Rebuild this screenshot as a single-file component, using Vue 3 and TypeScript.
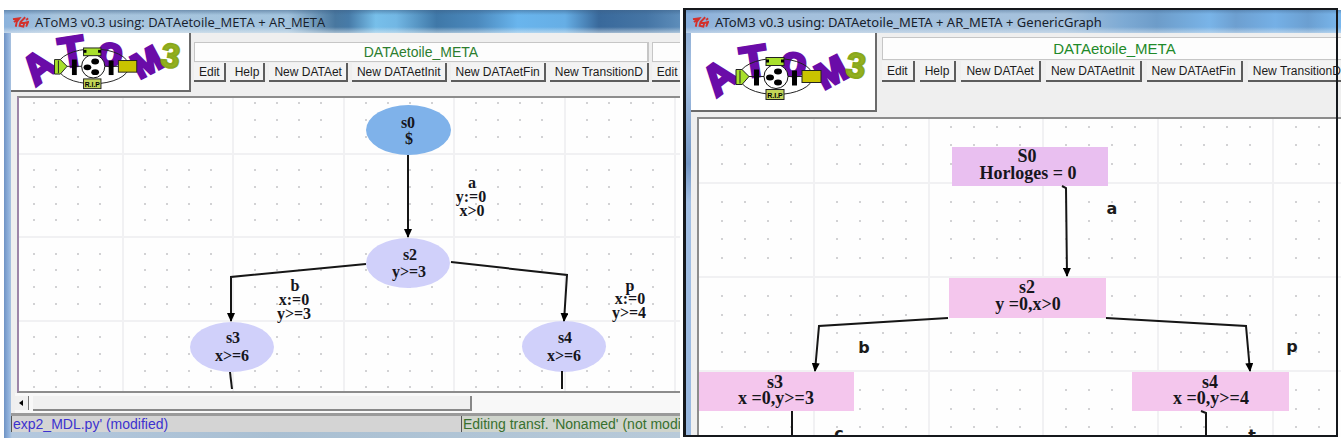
<script setup lang="ts">
interface Label { x: number; y: number; text: string; kind?: string }
interface Shape { x: number; y: number; w: number; h: number; tone: string }
interface Diagram {
  id: string
  title: string
  logoBox: string
  menus: { name: string; buttons: string[] }[]
  label: string
  height: number
  round: boolean
  shapes: Shape[]
  labels: Label[]
  edges: string[]
  tails: string[]
  grid: { dots: string; lines: string }
}

function makeGrid(x0: number, y0: number, stepX: number, stepY: number) {
  let dots = ''
  let lines = ''
  for (let i = 1; i < 90; i++) {
    const x = Math.round(x0 + i * stepX)
    if (i % 5 === 0) {
      lines += `M${x} 0V400`
      continue
    }
    for (let j = 1; j < 24; j++) {
      if (j % 5 === 0) continue
      dots += `M${x - 1} ${Math.round(y0 + j * stepY)}h2`
    }
  }
  for (let j = 5; j < 24; j += 5) lines += `M0 ${Math.round(y0 + j * stepY)}H2000`
  return { dots, lines }
}

const baseButtons = ['Edit', 'Help', 'New DATAet', 'New DATAetInit', 'New DATAetFin', 'New TransitionD']

const windows: Diagram[] = [
  {
    id: 'source',
    title: 'AToM3 v0.3 using: DATAetoile_META + AR_META',
    logoBox: '0 9 184 58',
    menus: [
      { name: 'DATAetoile_META', buttons: baseButtons },
      { name: '', buttons: ['Edit'] },
    ],
    label: 'Timed automaton',
    height: 293,
    round: true,
    shapes: [
      { x: 347, y: 7, w: 85, h: 50, tone: 'initial' },
      { x: 347, y: 140, w: 84, h: 50, tone: 'state' },
      { x: 171, y: 224, w: 84, h: 50, tone: 'state' },
      { x: 503, y: 223, w: 84, h: 51, tone: 'state' },
    ],
    labels: [
      { x: 389, y: 30, text: 's0' }, { x: 390, y: 46, text: '$' },
      { x: 391, y: 162, text: 's2' }, { x: 390, y: 179, text: 'y>=3' },
      { x: 214, y: 245, text: 's3' }, { x: 213, y: 263, text: 'x>=6' },
      { x: 546, y: 245, text: 's4' }, { x: 545, y: 263, text: 'x>=6' },
      { x: 453, y: 90, text: 'a' }, { x: 452, y: 104, text: 'y:=0' }, { x: 453, y: 118, text: 'x>0' },
      { x: 276, y: 193, text: 'b' }, { x: 275, y: 207, text: 'x:=0' }, { x: 275, y: 221, text: 'y>=3' },
      { x: 611, y: 193, text: 'p' }, { x: 611, y: 206, text: 'x:=0' }, { x: 610, y: 220, text: 'y>=4' },
    ],
    edges: ['M389 57V139', 'M347 166L212 179V223', 'M432 164L548 177L545 223'],
    tails: ['M211 274L213 291', 'M543 273V291'],
    grid: makeGrid(-7, -28, 22.1, 16.7),
  },
  {
    id: 'result',
    title: 'AToM3 v0.3 using: DATAetoile_META + AR_META + GenericGraph',
    logoBox: '0 0 184 76',
    menus: [{ name: 'DATAetoile_META', buttons: baseButtons }],
    label: 'Region graph',
    height: 318,
    round: false,
    shapes: [
      { x: 253, y: 28, w: 156, h: 39, tone: 'first' },
      { x: 250, y: 159, w: 157, h: 40, tone: 'region' },
      { x: 0, y: 253, w: 155, h: 39, tone: 'region' },
      { x: 433, y: 253, w: 157, h: 39, tone: 'region' },
    ],
    labels: [
      { x: 328, y: 43, text: 'S0' }, { x: 329, y: 60, text: 'Horloges = 0' },
      { x: 328, y: 174, text: 's2' }, { x: 329, y: 191, text: 'y =0,x>0' },
      { x: 76, y: 269, text: 's3' }, { x: 77, y: 285, text: 'x =0,y>=3' },
      { x: 511, y: 269, text: 's4' }, { x: 512, y: 285, text: 'x =0,y>=4' },
      { x: 413, y: 95, text: 'a', kind: 'event' },
      { x: 165, y: 234, text: 'b', kind: 'event' },
      { x: 593, y: 233, text: 'p', kind: 'event' },
      { x: 140, y: 320, text: 'c', kind: 'event' },
      { x: 553, y: 322, text: 't', kind: 'event' },
    ],
    edges: ['M363 67L367 69L368 157', 'M249 199L120 207L116 252', 'M407 199L547 207L551 252'],
    tails: ['M93 292V318', 'M502 292L507 294V318'],
    grid: makeGrid(0, -30, 22.95, 18.8),
  },
]
</script>

<template>
  <main class="desk">
    <section v-for="w in windows" :key="w.id" class="window" :class="w.id">
      <header class="titlebar">
        <svg class="tk" viewBox="0 0 18 12" aria-hidden="true">
          <path d="M1 3L8 2L5 6L4 11M2 6L5 4M14 1L9 6L8 10L12 11L13 7L9 7M15 4L17 2M13 7L17 6L15 11" />
        </svg>
        <h1>{{ w.title }}</h1>
      </header>
      <div class="body">
        <div class="toolbar">
          <div class="logo">
            <svg :viewBox="w.logoBox" role="img" aria-label="AToM3">
              <g class="letters">
                <text x="28" y="58" transform="rotate(-38 28 43)" font-size="42">A</text>
                <text x="63" y="43" transform="rotate(-9 63 29)" font-size="44">T</text>
                <text x="102" y="42" transform="rotate(10 102 34)" font-size="42">o</text>
                <text x="140" y="51" transform="rotate(-28 140 38)" font-size="36">M</text>
                <text class="three" x="165" y="44" transform="rotate(8 165 33)" font-size="35">3</text>
              </g>
              <ellipse cx="85" cy="43" rx="37" ry="18" class="orbit" />
              <path d="M57 43H73M97 43H111" class="wire" />
              <rect x="63" y="36" width="5" height="16" />
              <rect x="101" y="37" width="5" height="15" />
              <circle cx="85" cy="43" r="12" class="ball" />
              <ellipse cx="87" cy="38" rx="4" ry="3" />
              <ellipse cx="79" cy="44" rx="4" ry="3" />
              <ellipse cx="87" cy="49" rx="4" ry="3" />
              <path d="M45 36H51L58 43L51 51H45Z" class="part lime" />
              <path d="M49 37V50" class="wire" />
              <rect x="75" y="24" width="18" height="8" class="part lime" />
              <rect x="75" y="26" width="3" height="3" />
              <rect x="90" y="26" width="3" height="3" />
              <rect x="111" y="37" width="19" height="12" class="part gold" />
              <rect x="75" y="56" width="18" height="10" class="part olive" />
              <text x="84" y="64" class="tag">R.I.P</text>
            </svg>
          </div>
          <div class="menus">
            <div v-for="(m, i) in w.menus" :key="i" class="menu">
              <div class="menu-name">{{ m.name }}</div>
              <div class="buttons">
                <button v-for="b in m.buttons" :key="b" type="button">{{ b }}</button>
              </div>
            </div>
          </div>
        </div>
        <svg class="canvas" :height="w.height" role="img" :aria-label="w.label">
          <defs>
            <marker :id="'arrow-' + w.id" markerUnits="userSpaceOnUse" markerWidth="10" markerHeight="8" refX="8" refY="4" orient="auto">
              <path d="M0 0L9 4L0 8Z" />
            </marker>
          </defs>
          <path :d="w.grid.lines" class="grid-lines" />
          <path :d="w.grid.dots" class="grid-dots" />
          <rect
            v-for="(s, i) in w.shapes" :key="i"
            :x="s.x" :y="s.y" :width="s.w" :height="s.h"
            :rx="w.round ? s.w / 2 : 0" :ry="w.round ? s.h / 2 : 0" :class="s.tone"
          />
          <path v-for="e in w.edges" :key="e" :d="e" class="edge" :marker-end="`url(#arrow-${w.id})`" />
          <path v-for="t in w.tails" :key="t" :d="t" class="edge" />
          <text v-for="(l, i) in w.labels" :key="i" :x="l.x" :y="l.y" :class="l.kind || 'name'">{{ l.text }}</text>
        </svg>
        <template v-if="w.id === 'source'">
          <div class="scroll">
            <button type="button" class="scroll-left" aria-label="Scroll left">
              <svg viewBox="0 0 4 6" aria-hidden="true"><path d="M4 0V6L0 3Z" /></svg>
            </button>
            <div class="thumb"></div>
          </div>
          <footer class="status">
            <span class="file">exp2_MDL.py' (modified)</span>
            <span class="transf">Editing transf. 'Nonamed' (not modified)</span>
          </footer>
        </template>
      </div>
    </section>
  </main>
</template>

<style>
body { margin: 0; background: #fff; overflow: hidden; }
</style>

<style scoped>
.desk {
  display: grid;
  grid-template-columns: 676fr 658fr;
  column-gap: 3px;
  align-items: start;
  padding: 10px 0 0 4px;
  font-family: "Liberation Sans", Arial, sans-serif;
}
.window { min-width: 0; box-sizing: border-box; position: relative; }
.source {
  padding: 0 0 6px 7px;
  background: linear-gradient(90deg, #6f93c4, #93b4de 5px, #b4c8de 8px, #a9bfd2 40%, #b8cad9);
}
.result {
  padding-left: 8px;
  background: linear-gradient(180deg, #86a8d0, #a6c1e3 15%, #7396c4 36%, #a3c0e5 45%, #98b8e0);
}
.result::after {
  content: "";
  position: absolute;
  inset: -2px 3px 0 0;
  border: 2px solid #15181c;
  border-left-width: 3px;
  pointer-events: none;
}
.titlebar {
  display: flex;
  align-items: center;
  gap: 6px;
  height: 23px;
  box-sizing: border-box;
}
.source .titlebar {
  margin-left: -7px;
  padding-left: 8px;
  background:
    linear-gradient(180deg, #3c5f8580 0, #ffffff00 5px, #ffffff00 17px, #e8eef299 23px),
    linear-gradient(90deg, #8bb2dc 0, #a9c5dd 8%, #a3c4de 42%, #48779f 49%, #477ba8 51%, #77bfea 55%, #72b7e4 58%, #3f78a8 64%, #4b89bd 70%, #69b5ed 76%, #66aee5 83%, #39699b 88%, #4575a5 95%, #5d8dba);
}
.result .titlebar {
  margin-left: -8px;
  padding-left: 9px;
  background:
    linear-gradient(180deg, #3c5f8560 0, #ffffff00 4px, #ffffff00 17px, #dce7f099 23px),
    linear-gradient(90deg, #86addb 0, #a4c0dc 12%, #a5c1dc 58%, #7daad4 67%, #6d9cc9 72%, #79b4e8 80%, #6d9fd0 84%, #75b0e6 90%, #6b9fd1 95%, #7ab8ee);
}
.tk { width: 17px; height: 12px; fill: none; stroke: #d3312c; stroke-width: 2; }
h1 {
  margin: 0;
  font: 400 13px/20px "Open Sans", "Noto Sans", sans-serif;
  color: #17202b;
  white-space: nowrap;
}
.result h1 { font-family: "Noto Sans", "Open Sans", sans-serif; }
.body { background: #efefef; overflow: hidden; }
.toolbar { display: flex; gap: 3px; }
.result .toolbar { gap: 5px; }
.logo {
  flex: none;
  box-sizing: border-box;
  width: 180px;
  height: 59px;
  background: #fff;
  border: solid #6b6b6b;
  border-width: 0 2px 2px 0;
}
.result .logo { width: 186px; height: 79px; }
.logo svg { display: block; width: 100%; height: 100%; }
.letters text {
  font-family: "Liberation Sans", Arial, sans-serif;
  font-weight: 700;
  text-anchor: middle;
  fill: #6a0ca8;
  stroke: #6a0ca8;
  stroke-width: 3;
}
.letters .three { fill: #92b020; stroke: #8aa81c; stroke-width: 2; }
.orbit, .wire { fill: none; stroke: #222; }
.ball { fill: #fff; stroke: #111; }
.part { stroke: #222; }
.lime { fill: #a8e02c; }
.olive { fill: #c3d558; }
.gold { fill: #c9c400; }
.tag { font: 700 7px "Liberation Sans", sans-serif; text-anchor: middle; }
.menus { display: flex; gap: 3px; padding-top: 9px; min-width: 0; flex: 1; overflow: hidden; }
.result .menus { padding-top: 4px; }
.menu { flex: none; }
.menu:last-child { flex: 1 0 auto; }
.menu-name {
  height: 20px;
  box-sizing: border-box;
  border: 1px solid #c6c6c6;
  border-width: 1px 2px 1px 1px;
  background: #fdfdfd;
  color: #2d7d2f;
  font-size: 14px;
  line-height: 19px;
  text-align: center;
}
.result .menu-name { height: 23px; font-size: 15px; line-height: 21px; color: #1f8a2a; }
.buttons { display: flex; gap: 4px; padding-top: 1px; }
.result .buttons { gap: 5px; }
.buttons button {
  flex: none;
  height: 19px;
  padding: 0 4px 0 5px;
  border: solid #5c5c5c;
  border-width: 0 2px 2px 0;
  border-radius: 0;
  background: #f3f3f3;
  color: #1c1c1c;
  font: 12px/18px "Liberation Sans", Arial, sans-serif;
  white-space: nowrap;
}
.result .buttons button { height: 21px; padding: 0 5px; }
.canvas {
  display: block;
  width: calc(100% - 6px);
  margin: 4px 0 0 6px;
  border: solid #8c8c8c;
  border-width: 2px 0 2px 2px;
  background: #fefefe;
}
.source .canvas { border-left-color: #9d86a8; }
.result .canvas { margin-top: 5px; border-bottom: 0; }
.grid-lines { stroke: #f1f1f3; stroke-width: 2; fill: none; }
.grid-dots { stroke: #d2d2d4; stroke-width: 2; fill: none; }
.initial { fill: #7fb2ea; }
.state { fill: #d0d0fa; }
.first { fill: #e9bff0; }
.region { fill: #f4c6ed; }
.edge { fill: none; stroke: #161616; stroke-width: 2; }
.name { font: 700 16px "Liberation Serif", "Times New Roman", serif; text-anchor: middle; fill: #16161c; }
.result .name { font-size: 18px; }
.event { font: 700 16px "DejaVu Sans", sans-serif; text-anchor: middle; fill: #1b1b1b; }
.scroll { display: flex; align-items: center; height: 20px; margin-left: 4px; background: #f8f8f8; }
.scroll-left {
  width: 14px;
  height: 14px;
  padding: 0 4px;
  border: solid #777;
  border-width: 0 1px 0 0;
  background: #f0f0f0;
}
.scroll-left svg { display: block; width: 4px; height: 6px; }
.thumb {
  width: 66%;
  height: 15px;
  box-sizing: border-box;
  margin-left: 4px;
  border: solid #888;
  border-width: 0 2px 2px 0;
  background: #f0f0f0;
}
.status {
  display: grid;
  grid-template-columns: 450fr 219fr;
  border-top: 3px solid #9a9a9a;
  font-size: 14px;
  line-height: 16px;
  white-space: nowrap;
  background: #d4d4d4;
}
.status span { overflow: hidden; border-left: 1px solid #555; padding-left: 1px; }
.file { color: #3c32cf; }
.transf { color: #37702f; background: #cfd4cc; }
</style>
